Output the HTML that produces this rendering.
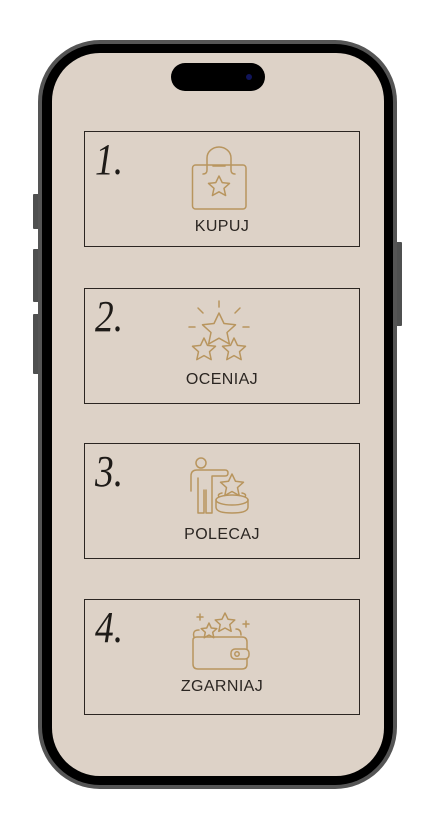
<!DOCTYPE html>
<html><head><meta charset="utf-8"><style>
html,body{margin:0;padding:0;background:#fff;width:441px;height:834px;overflow:hidden}
.abs{position:absolute}
.btn{position:absolute;background:#4f5050;border-radius:1px}
.phone{position:absolute;left:38px;top:40px;width:359px;height:749px;border-radius:62px;background:#555;box-sizing:border-box}
.bezel{position:absolute;left:4px;top:4px;right:4px;bottom:4px;border-radius:58px;background:#000}
.island{position:absolute;left:171px;top:63px;width:94px;height:28px;border-radius:14px;background:#000}
.cam{position:absolute;left:246px;top:74px;width:6px;height:6px;border-radius:50%;background:#10145a}
.box{position:absolute;left:84px;width:276px;height:116px;border:1px solid #2b2622;box-sizing:border-box}
.num{position:absolute;left:10px;top:6px;font-family:"Liberation Serif",serif;font-style:italic;font-size:44px;color:#1e1b18;line-height:1;transform:scaleX(0.85);transform-origin:left top}
.lbl{position:absolute;left:0;right:0;text-align:center;font-family:"Liberation Sans",sans-serif;font-size:16px;letter-spacing:0.4px;color:#2b2622;line-height:1}
svg.ic{position:absolute;left:0;top:0}
svg.ic *{fill:none;stroke:#b8955e;stroke-width:1.5;stroke-linecap:round;stroke-linejoin:round}
</style></head><body>
<div class="btn" style="left:33px;top:194px;width:6px;height:35px"></div>
<div class="btn" style="left:33px;top:249px;width:6px;height:53px"></div>
<div class="btn" style="left:33px;top:314px;width:6px;height:60px"></div>
<div class="btn" style="left:396px;top:242px;width:6px;height:84px"></div>
<div class="phone"><div class="bezel"></div></div>
<div class="abs" style="left:52px;top:53px;width:332px;height:723px;border-radius:48px;background:#ddd2c7"></div>
<div class="island"></div><div class="cam"></div>

<div class="box" style="top:131px"><div class="num">1.</div><div class="lbl" style="top:87px">KUPUJ</div></div>
<div class="box" style="top:288px"><div class="num">2.</div><div class="lbl" style="top:83px">OCENIAJ</div></div>
<div class="box" style="top:443px"><div class="num">3.</div><div class="lbl" style="top:83px">POLECAJ</div></div>
<div class="box" style="top:599px"><div class="num">4.</div><div class="lbl" style="top:79px">ZGARNIAJ</div></div>

<svg class="ic" width="441" height="834" viewBox="0 0 441 834">
  <rect x="192.5" y="165" width="53.5" height="44" rx="3"/>
  <path d="M203 174 Q207 174 207 170 V158 A12 11 0 0 1 231 158 V170 Q231 174 235 174"/>
  <path d="M213 166 H225"/>
  <path d="M219 176 L222.2 182.6 L229.5 183.4 L224 188.3 L225.6 195.5 L219 191.8 L212.4 195.5 L214 188.3 L208.5 183.4 L215.8 182.6 Z"/>
  <path d="M219 301 V307 M198 308 L203 313 M240 308 L235 313 M189 327 H195 M243 327 H249"/>
  <path d="M219 313 L224 323.5 L235.5 324.8 L227 332.5 L229.4 344 L219 338.2 L208.6 344 L211 332.5 L202.5 324.8 L214 323.5 Z"/>
  <path d="M204 338 L207.5 345.4 L215.5 346.3 L209.5 351.7 L211.2 359.6 L204 355.6 L196.8 359.6 L198.5 351.7 L192.5 346.3 L200.5 345.4 Z"/>
  <path d="M234 338 L237.5 345.4 L245.5 346.3 L239.5 351.7 L241.2 359.6 L234 355.6 L226.8 359.6 L228.5 351.7 L222.5 346.3 L230.5 345.4 Z"/>
  <circle cx="201" cy="463" r="5"/>
  <path d="M191 491 V476 Q191 470 197 470 H225 Q228 470 228 473 Q228 476 225 476 H212 V513 H206 V490 M204 490 V513 H198 V478"/>
  <path d="M232 474 L235.5 481.3 L243.5 482.2 L237.5 487.6 L239.2 495.5 L232 491.5 L224.8 495.5 L226.5 487.6 L220.5 482.2 L228.5 481.3 Z"/>
  <path d="M219 497 Q217 494 222 493 M242 493 Q247 494 245 497"/>
  <ellipse cx="232" cy="500" rx="16" ry="5"/>
  <path d="M216 500 V507 Q216 513 232 513 Q248 513 248 507 V500"/>
  <path d="M200 614 V620 M197 617 H203 M246 621 V627 M243 624 H249" stroke-width="1"/>
  <path d="M225 613 L228 619.2 L234.8 620 L229.8 624.6 L231.2 631.3 L225 628 L218.8 631.3 L220.2 624.6 L215.2 620 L222 619.2 Z"/>
  <path d="M209 623 L211.3 628 L216.8 628.6 L212.7 632.3 L213.8 637.7 L209 635 L204.2 637.7 L205.3 632.3 L201.2 628.6 L206.7 628 Z"/>
  <path d="M194 637 Q192 630 199 630 M236 629 Q241 629 241 635"/>
  <path d="M197 637 H242 Q247 637 247 642 V649 M247 659 V664 Q247 669 242 669 H198 Q193 669 193 664 V640 Q193 637 197 637"/>
  <rect x="231" y="649" width="18" height="10" rx="4"/>
  <circle cx="237" cy="654" r="2.2"/>
</svg>
</body></html>
